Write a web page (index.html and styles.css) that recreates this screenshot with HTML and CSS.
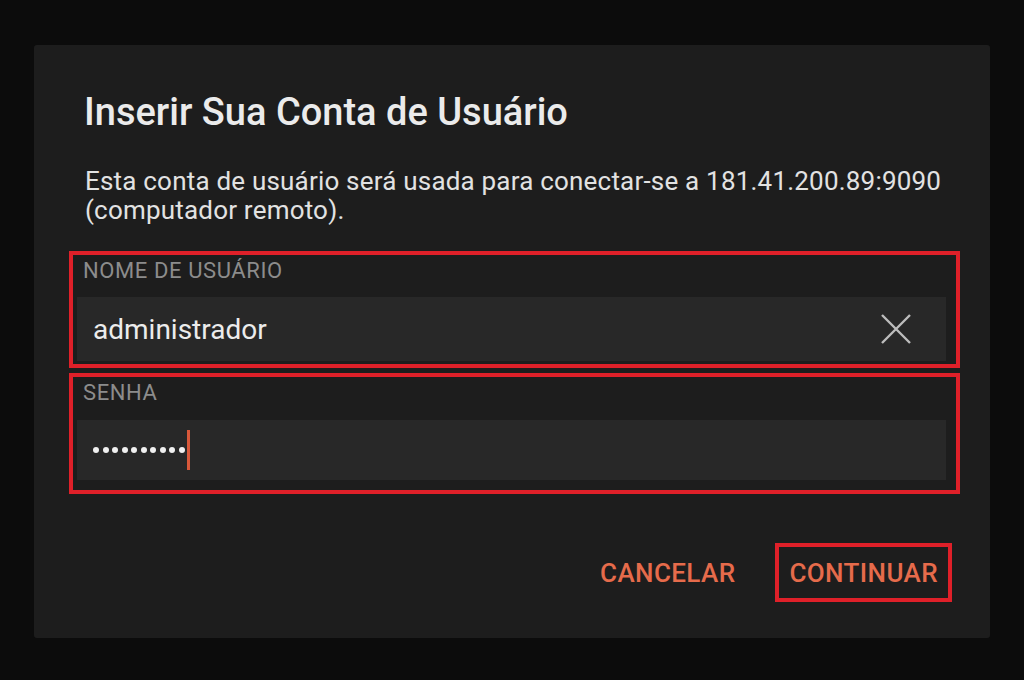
FILE: index.html
```html
<!DOCTYPE html>
<html lang="pt">
<head>
    <meta charset="UTF-8">
    <meta name="viewport" content="width=device-width, initial-scale=1.0">
    <title>Inserir Sua Conta de Usuário</title>
    <link rel="stylesheet" href="styles.css">
</head>
<body>

<!-- Dialog -->
<div class="dialog">
    <div class="dialog-title">Inserir Sua Conta de Usuário</div>
    <div class="dialog-text">Esta conta de usuário será usada para conectar-se a 181.41.200.89:9090 (computador remoto).</div>

    <div class="field-group field-user">
        <div class="field-label">NOME DE USUÁRIO</div>
        <div class="field-input">
            <span class="field-value">administrador</span>
            <svg class="clear-icon" width="32" height="32" viewBox="0 0 32 32">
                <path d="M2 2 L30 30 M30 2 L2 30" stroke="#bdbdbd" stroke-width="2.4" fill="none"/>
            </svg>
        </div>
    </div>

    <div class="field-group field-pass">
        <div class="field-label">SENHA</div>
        <div class="field-input">
            <span class="dots">
                <i></i><i></i><i></i><i></i><i></i><i></i><i></i><i></i><i></i><i></i>
            </span>
            <span class="cursor"></span>
        </div>
    </div>

    <div class="dialog-actions">
        <button class="action-btn">CANCELAR</button>
        <button class="action-btn marked">CONTINUAR</button>
    </div>
</div>

</body>
</html>
```

FILE: styles.css
```css
* {
    margin: 0;
    padding: 0;
    box-sizing: border-box;
    font-family: Roboto, 'Noto Sans', sans-serif;
}

body {
    background-color: #0c0c0c;
    width: 1024px;
    height: 680px;
    overflow: hidden;
}

.dialog {
    margin: 45px 0 0 34px;
    width: 956px;
    height: 593px;
    background-color: #1d1d1d;
    border-radius: 3px;
    padding: 44px 30px 0 35px;
}

.dialog-title {
    padding-left: 15px;
    font-size: 38px;
    line-height: 46px;
    font-weight: 500;
    color: #ebebeb;
}

.dialog-text {
    margin-top: 32px;
    padding-left: 16px;
    font-size: 26px;
    line-height: 29px;
    letter-spacing: 0.2px;
    color: #e2e2e2;
}

.field-group {
    border: 4px solid #df2029;
    padding: 0 10px 3px 4px;
}

.field-user {
    margin-top: 26px;
}

.field-pass {
    margin-top: 5px;
    padding-bottom: 10px;
}

.field-label {
    height: 42px;
    line-height: 32px;
    padding-left: 6px;
    font-size: 22px;
    letter-spacing: 0.6px;
    color: #8c8c8c;
}

.field-pass .field-label {
    height: 43px;
}

.field-input {
    height: 64px;
    background-color: #282828;
    display: flex;
    align-items: center;
    padding: 0 34px 0 16px;
}

.field-pass .field-input {
    height: 60px;
}

.field-value {
    flex-grow: 1;
    font-size: 28px;
    color: #ececec;
}

.clear-icon {
    display: block;
}

.dots {
    display: flex;
    gap: 3.5px;
}

.dots i {
    width: 6px;
    height: 6px;
    border-radius: 50%;
    background-color: #f0f0f0;
}

.cursor {
    width: 3px;
    height: 40px;
    margin-left: 2px;
    background-color: #d9583a;
}

.dialog-actions {
    margin-top: 49px;
    display: flex;
    justify-content: flex-end;
    gap: 26px;
    padding-right: 8px;
}

.action-btn {
    height: 59px;
    padding: 0 10px;
    background: none;
    border: 4px solid transparent;
    font-size: 26px;
    font-weight: 500;
    letter-spacing: 0.4px;
    color: #e66b4b;
}

.action-btn.marked {
    border-color: #df2029;
}
```
